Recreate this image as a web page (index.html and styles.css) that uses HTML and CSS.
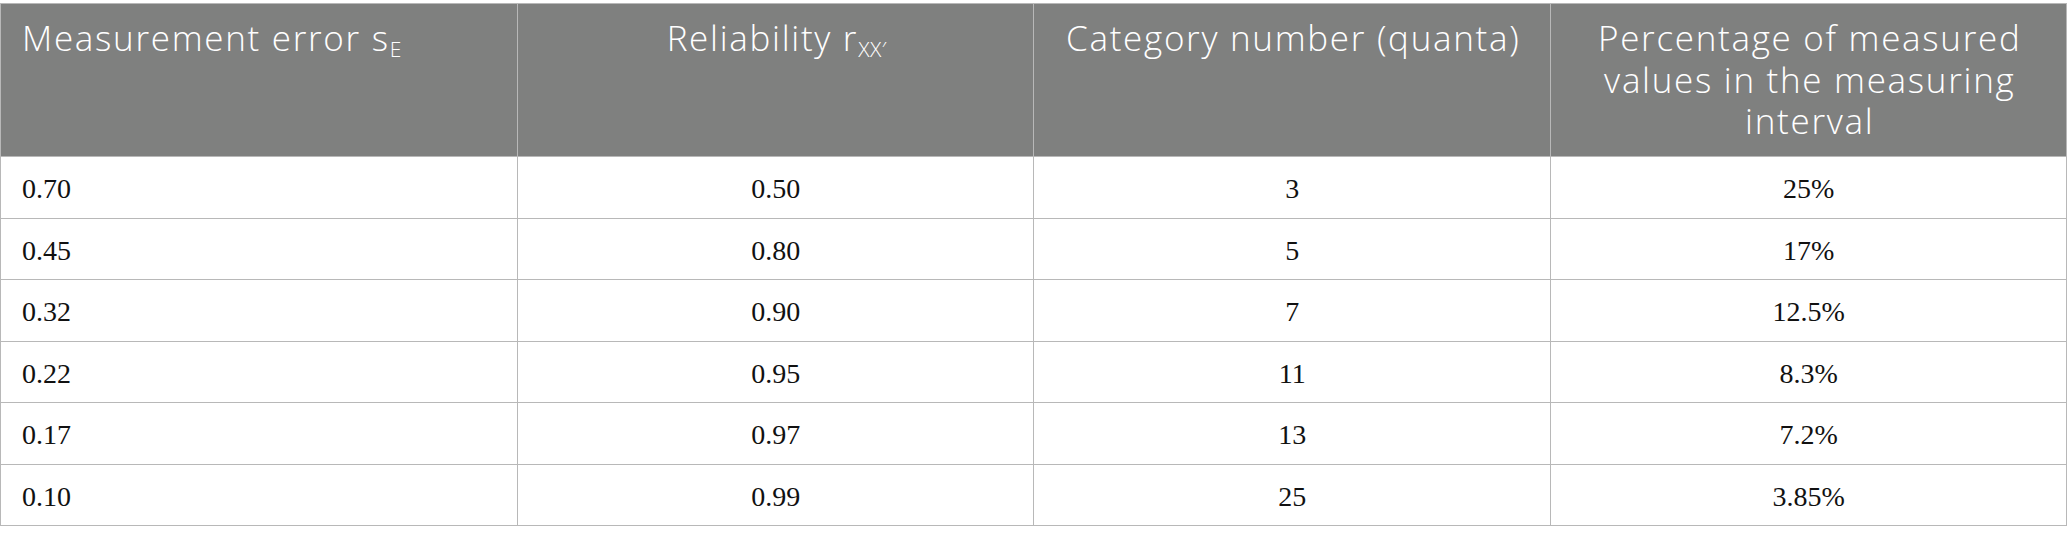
FILE: index.html
```html
<!DOCTYPE html>
<html>
<head>
<meta charset="utf-8">
<link rel="stylesheet" href="styles.css">
</head>
<body>
<div class="wrap">
<table class="data">
  <thead>
    <tr>
      <th class="left">Measurement error s<sub>E</sub></th>
      <th>Reliability r<sub>XX′</sub></th>
      <th>Category number (quanta)</th>
      <th>Percentage of measured values in the measuring interval</th>
    </tr>
  </thead>
  <tbody>
    <tr><td class="left">0.70</td><td>0.50</td><td>3</td><td>25%</td></tr>
    <tr><td class="left">0.45</td><td>0.80</td><td>5</td><td>17%</td></tr>
    <tr><td class="left">0.32</td><td>0.90</td><td>7</td><td>12.5%</td></tr>
    <tr><td class="left">0.22</td><td>0.95</td><td>11</td><td>8.3%</td></tr>
    <tr><td class="left">0.17</td><td>0.97</td><td>13</td><td>7.2%</td></tr>
    <tr><td class="left">0.10</td><td>0.99</td><td>25</td><td>3.85%</td></tr>
  </tbody>
</table>
</div>
</body>
</html>
```
FILE: styles.css
```css
html, body {
  margin: 0;
  padding: 0;
  background: #ffffff;
}
.wrap {
  padding-top: 3px;
  width: 2067px;
}
.data {
  width: 2067px;
  border-collapse: collapse;
  table-layout: fixed;
}
.data th, .data td {
  border: 1px solid #b8b8b8;
  width: 25%;
}
.data th {
  background: #7f807f;
  color: #ffffff;
  font-family: "Open Sans", "Noto Sans", sans-serif;
  font-weight: 300;
  font-size: 35px;
  letter-spacing: 1.7px;
  line-height: 41.5px;
  height: 153px;
  padding: 13px 18px 14px 21px;
  box-sizing: border-box;
  vertical-align: top;
  text-align: center;
}
.data th sub {
  font-size: 21px;
  letter-spacing: 0.5px;
  line-height: 0;
  vertical-align: -6px;
}
.data td {
  font-family: "Liberation Serif", "Times New Roman", serif;
  font-size: 28px;
  color: #111111;
  height: 61.5px;
  box-sizing: border-box;
  padding: 4px 20px 0 21px;
  text-align: center;
  vertical-align: middle;
}
.data .left {
  text-align: left;
}
```
